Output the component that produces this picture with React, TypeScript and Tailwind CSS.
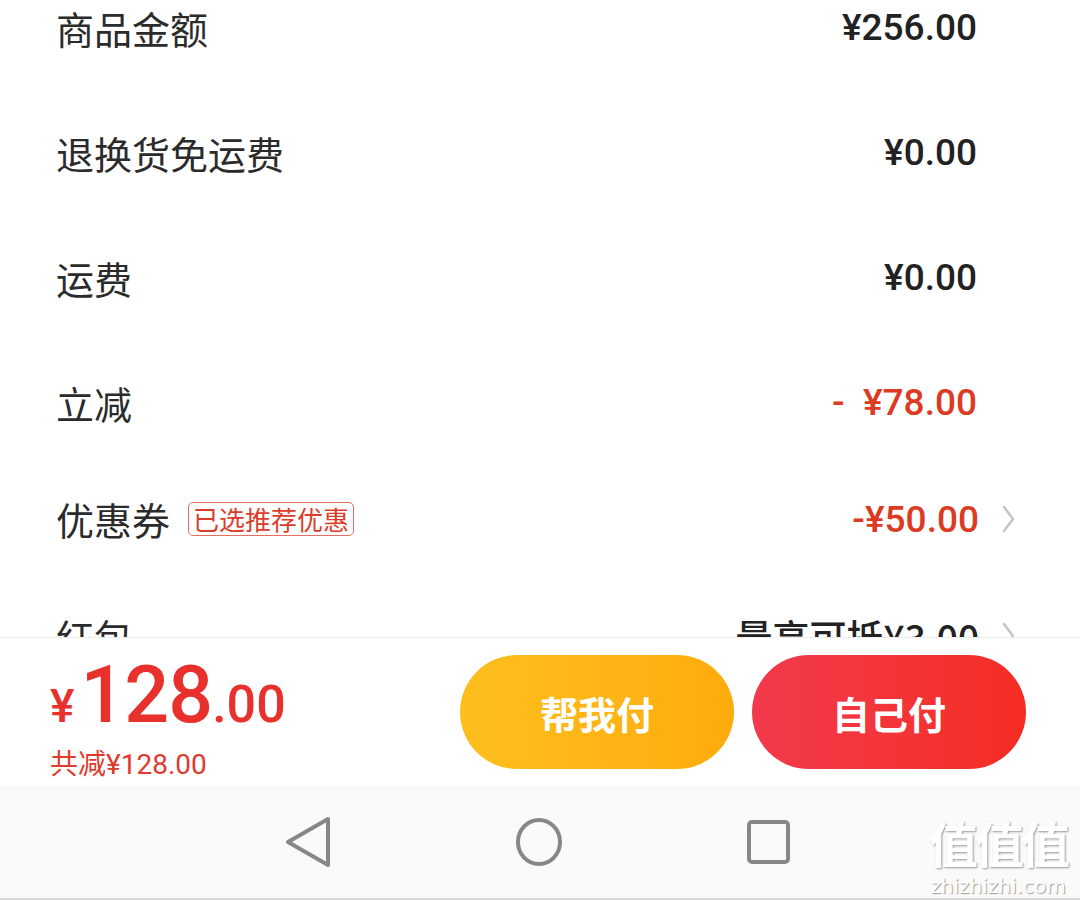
import React from 'react';

const cjk = "'Noto Sans CJK SC', sans-serif";
const num = "Roboto, 'Noto Sans CJK SC', sans-serif";

type Row = {
  label: string;
  value: string;
  red?: boolean;
  tag?: string;
  arrow?: boolean;
  h: string;
};

const rows: Row[] = [
  { label: '商品金额', value: '¥256.00', h: 'h-[125px]' },
  { label: '退换货免运费', value: '¥0.00', h: 'h-[125px]' },
  { label: '运费', value: '¥0.00', h: 'h-[125px]' },
  { label: '立减', value: '-  ¥78.00', red: true, h: 'h-[125px]' },
  { label: '优惠券', value: '-¥50.00', red: true, tag: '已选推荐优惠', arrow: true, h: 'h-[108px]' },
  { label: '红包', value: '最高可抵¥3.00', arrow: true, h: 'h-[126px]' },
];

function Chevron() {
  return (
    <svg width="16" height="30" viewBox="0 0 16 30" className="ml-[22px] mr-[-40px]">
      <path d="M3 3 L12 15 L3 27" fill="none" stroke="#c4c4c4" strokeWidth="2.5" strokeLinecap="round" strokeLinejoin="round" />
    </svg>
  );
}

export default function App() {
  return (
    <div className="relative w-[1080px] h-[900px] bg-white flex flex-col overflow-hidden" style={{ fontFamily: cjk }}>
      <div className="h-[637px] overflow-hidden px-[56px]">
        <div className="mt-[-35px]">
          {rows.map((r) => (
            <div key={r.label} className={`${r.h} flex items-center justify-between pr-[47px]`}>
              <div className="flex items-center">
                <span className="text-[38px] text-[#2b2b2b] leading-none">{r.label}</span>
                {r.tag && (
                  <span className="ml-[18px] h-[34px] px-[4px] flex items-center border border-[#e47063] rounded-[5px] text-[26px] leading-none text-[#dc3d2b]">
                    {r.tag}
                  </span>
                )}
              </div>
              <div className="flex items-center">
                <span
                  className={`text-[37px] font-medium leading-none whitespace-pre ${r.red ? 'text-[#dc3a22]' : 'text-[#222]'}`}
                  style={{ fontFamily: r.label === '红包' ? cjk : num }}
                >
                  {r.value}
                </span>
                {r.arrow && <Chevron />}
              </div>
            </div>
          ))}
        </div>
      </div>

      <div className="h-[149px] bg-white border-t border-[#ececec] flex items-center pl-[50px] pr-[54px]">
        <div className="flex flex-col text-[#e8302c]" style={{ fontFamily: num }}>
          <div className="flex items-baseline leading-none mt-[10px]">
            <span className="text-[46px] font-medium mr-[6px]">¥</span>
            <span className="text-[79px] font-medium tracking-[-1px]">128</span>
            <span className="text-[52px] font-medium">.00</span>
          </div>
          <span className="text-[28px] mt-[16px] leading-none text-[#e03a2f]" style={{ fontFamily: num }}>共减¥128.00</span>
        </div>
        <div className="ml-auto flex gap-[18px]">
          <button className="w-[274px] h-[114px] rounded-full bg-gradient-to-r from-[#fdbf1d] to-[#ffab0c] text-white text-[38px] font-bold">
            帮我付
          </button>
          <button className="w-[274px] h-[114px] rounded-full bg-gradient-to-r from-[#f23a4b] to-[#f52d21] text-white text-[38px] font-bold">
            自己付
          </button>
        </div>
      </div>

      <div className="flex-1 bg-[#fafafa] border-b-2 border-[#d6d6d6] flex items-center gap-[182px] pl-[286px]">
        <svg width="46" height="52" viewBox="0 0 46 52">
          <path d="M44 3 L4 26 L44 49 Z" fill="none" stroke="#878787" strokeWidth="4" strokeLinejoin="round" transform="translate(-2 0)" />
        </svg>
        <svg width="50" height="50" viewBox="0 0 50 50">
          <ellipse cx="25" cy="25" rx="21" ry="22" fill="none" stroke="#878787" strokeWidth="4" />
        </svg>
        <svg width="46" height="46" viewBox="0 0 46 46">
          <rect x="3" y="3" width="39" height="40" rx="3" fill="none" stroke="#878787" strokeWidth="4" />
        </svg>
      </div>

      <div className="absolute left-[929px] top-[817px] flex flex-col items-center text-white">
        <span className="text-[49px] font-bold leading-none tracking-[-3px]" style={{ textShadow: '1px 1px 2px #9a9a9a' }}>值值值</span>
        <span className="text-[20px] leading-none mt-[10px]" style={{ fontFamily: "'DejaVu Sans', sans-serif", textShadow: '1px 1px 1px #9a9a9a' }}>zhizhizhi.com</span>
      </div>
    </div>
  );
}
